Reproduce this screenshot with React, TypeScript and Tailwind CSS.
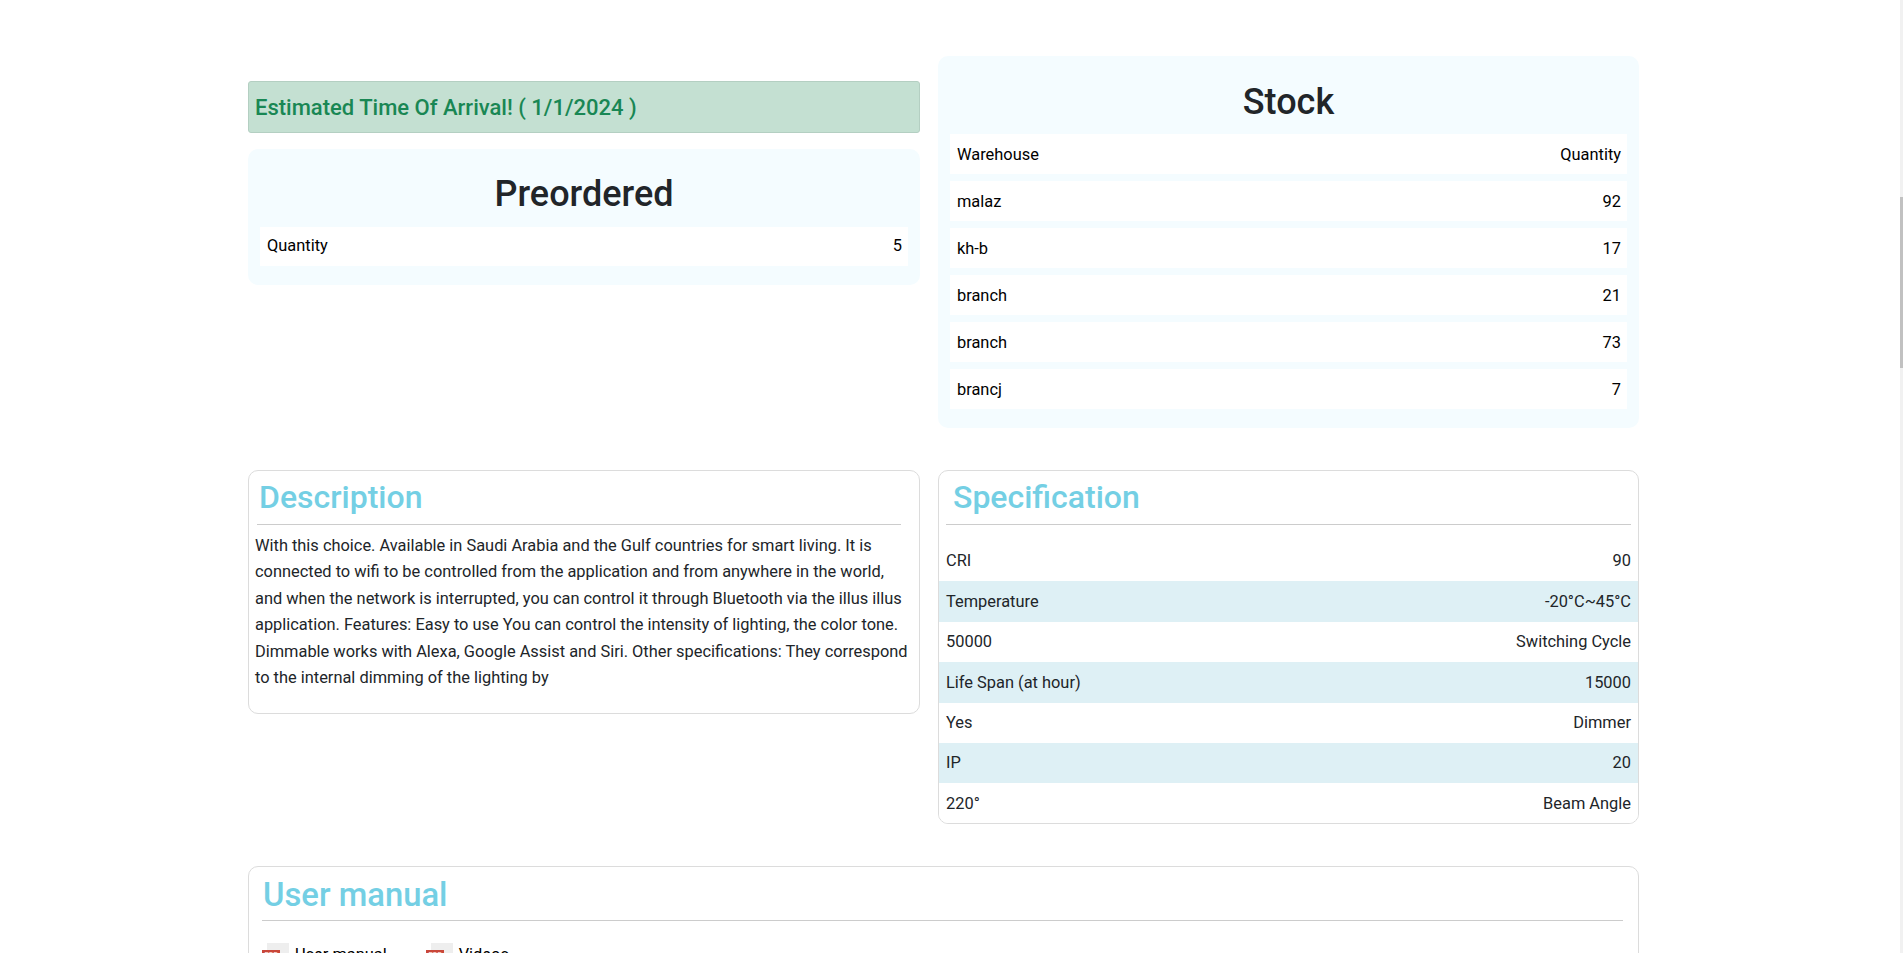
const font = "font-['Roboto','Liberation_Sans',sans-serif]";

const stock = [
  ['Warehouse', 'Quantity'],
  ['malaz', '92'],
  ['kh-b', '17'],
  ['branch', '21'],
  ['branch', '73'],
  ['brancj', '7'],
];

const specs = [
  ['CRI', '90'],
  ['Temperature', '-20°C~45°C'],
  ['50000', 'Switching Cycle'],
  ['Life Span (at hour)', '15000'],
  ['Yes', 'Dimmer'],
  ['IP', '20'],
  ['220°', 'Beam Angle'],
];

function PdfIcon() {
  return (
    <svg width="27" height="30" viewBox="0 0 27 30" className="shrink-0">
      <path d="M5 0h22v30H5z" fill="#eeeeee" />
      <path d="M0 7h18v12H0z" fill="#c9473a" />
      <text x="9" y="14" textAnchor="middle" fontSize="7" fontWeight="700" fill="#f6d9d5">PDF</text>
    </svg>
  );
}

function StockRow({ left, right, low }: { left: string; right: string; low?: boolean }) {
  return (
    <div className={`bg-white flex items-center justify-between pr-[6px] pl-[7px] text-[16.4px] text-black ${low ? 'h-10 pt-[2px]' : 'h-[39px]'}`}>
      <span>{left}</span>
      <span>{right}</span>
    </div>
  );
}

export default function App() {
  return (
    <div className={`h-[953px] w-full overflow-hidden flex bg-white ${font}`}>
      <main className="flex-1 min-w-0 pl-[248px] pt-[56px]">
        <div className="w-[1391px]">
          <div className="grid grid-cols-[672px_701px] gap-x-[18px]">
            <div className="pt-[25px]">
              <div className="h-[52px] bg-[#c4e0d2] border border-[#b4cfc2] rounded-[3px] flex items-center px-[6px] text-[22px] font-medium text-[#198754]">
                Estimated Time Of Arrival! ( 1/1/2024 )
              </div>
              <div className="mt-[16px] h-[136px] bg-[#f4fcff] rounded-[10px] px-[12px] pt-[20px]">
                <h2 className="h-[58px] text-center text-[36px] leading-[51px] font-medium text-[#212529]">Preordered</h2>
                <StockRow left="Quantity" right="5" />
              </div>
            </div>
            <div className="h-[372px] bg-[#f4fcff] rounded-[10px] px-[12px] pt-[20px]">
              <h2 className="h-[58px] text-center text-[36px] leading-[52px] font-medium text-[#212529]">Stock</h2>
              <div className="flex flex-col gap-[7px]">
                {stock.map(([l, r], i) => (
                  <StockRow key={i} left={l} right={r} low />
                ))}
              </div>
            </div>
          </div>

          <div className="mt-[42px] grid grid-cols-[672px_701px] gap-x-[18px] items-start">
            <section className="h-[244px] border border-[#dcdcdc] rounded-[10px] px-[6px]">
              <div className="ml-[2px] mr-[12px] h-[54px] border-b border-[#cccccc]">
                <h3 className="pl-[2px] text-[32px] leading-[53px] font-medium text-[#74cfe4]">Description</h3>
              </div>
              <p className="mt-[8px] text-[16.4px] leading-[26.4px] text-[#212529]">
                With this choice. Available in Saudi Arabia and the Gulf countries for smart living. It is connected to wifi to be controlled from the application and from anywhere in the world, and when the network is interrupted, you can control it through Bluetooth via the illus illus application. Features: Easy to use You can control the intensity of lighting, the color tone. Dimmable works with Alexa, Google Assist and Siri. Other specifications: They correspond to the internal dimming of the lighting by
              </p>
            </section>
            <section className="h-[354px] border border-[#dcdcdc] rounded-[10px] overflow-hidden">
              <div className="mx-[7px] h-[54px] border-b border-[#cccccc]">
                <h3 className="pl-[7px] text-[32px] leading-[53px] font-medium text-[#74cfe4]">Specification</h3>
              </div>
              <div className="mt-[16px]">
                {specs.map(([l, r], i) => (
                  <div key={i} className={`h-[40.4px] pt-[1px] flex items-center justify-between px-[7px] text-[16.4px] text-[#212529] ${i % 2 === 1 ? 'bg-[#def0f5]' : 'bg-white'}`}>
                    <span>{l}</span>
                    <span>{r}</span>
                  </div>
                ))}
              </div>
            </section>
          </div>

          <section className="mt-[42px] h-[200px] border border-[#dcdcdc] rounded-[10px] pl-[13px] pr-[15px]">
            <div className="h-[54px] border-b border-[#cccccc]">
              <h3 className="pl-[1px] text-[32.8px] leading-[57px] font-medium text-[#74cfe4]">User manual</h3>
            </div>
            <div className="mt-[22px] flex gap-[39px] text-[16.4px] text-black">
              <div className="flex items-start gap-[6px]">
                <PdfIcon />
                <span>User manual</span>
              </div>
              <div className="flex items-start gap-[6px]">
                <PdfIcon />
                <span>Videos</span>
              </div>
            </div>
          </section>
        </div>
      </main>
      <aside className="w-[3px] h-full bg-[#f1f1f1] pt-[197px] shrink-0">
        <div className="h-[171px] bg-[#c1c1c1]" />
      </aside>
    </div>
  );
}
